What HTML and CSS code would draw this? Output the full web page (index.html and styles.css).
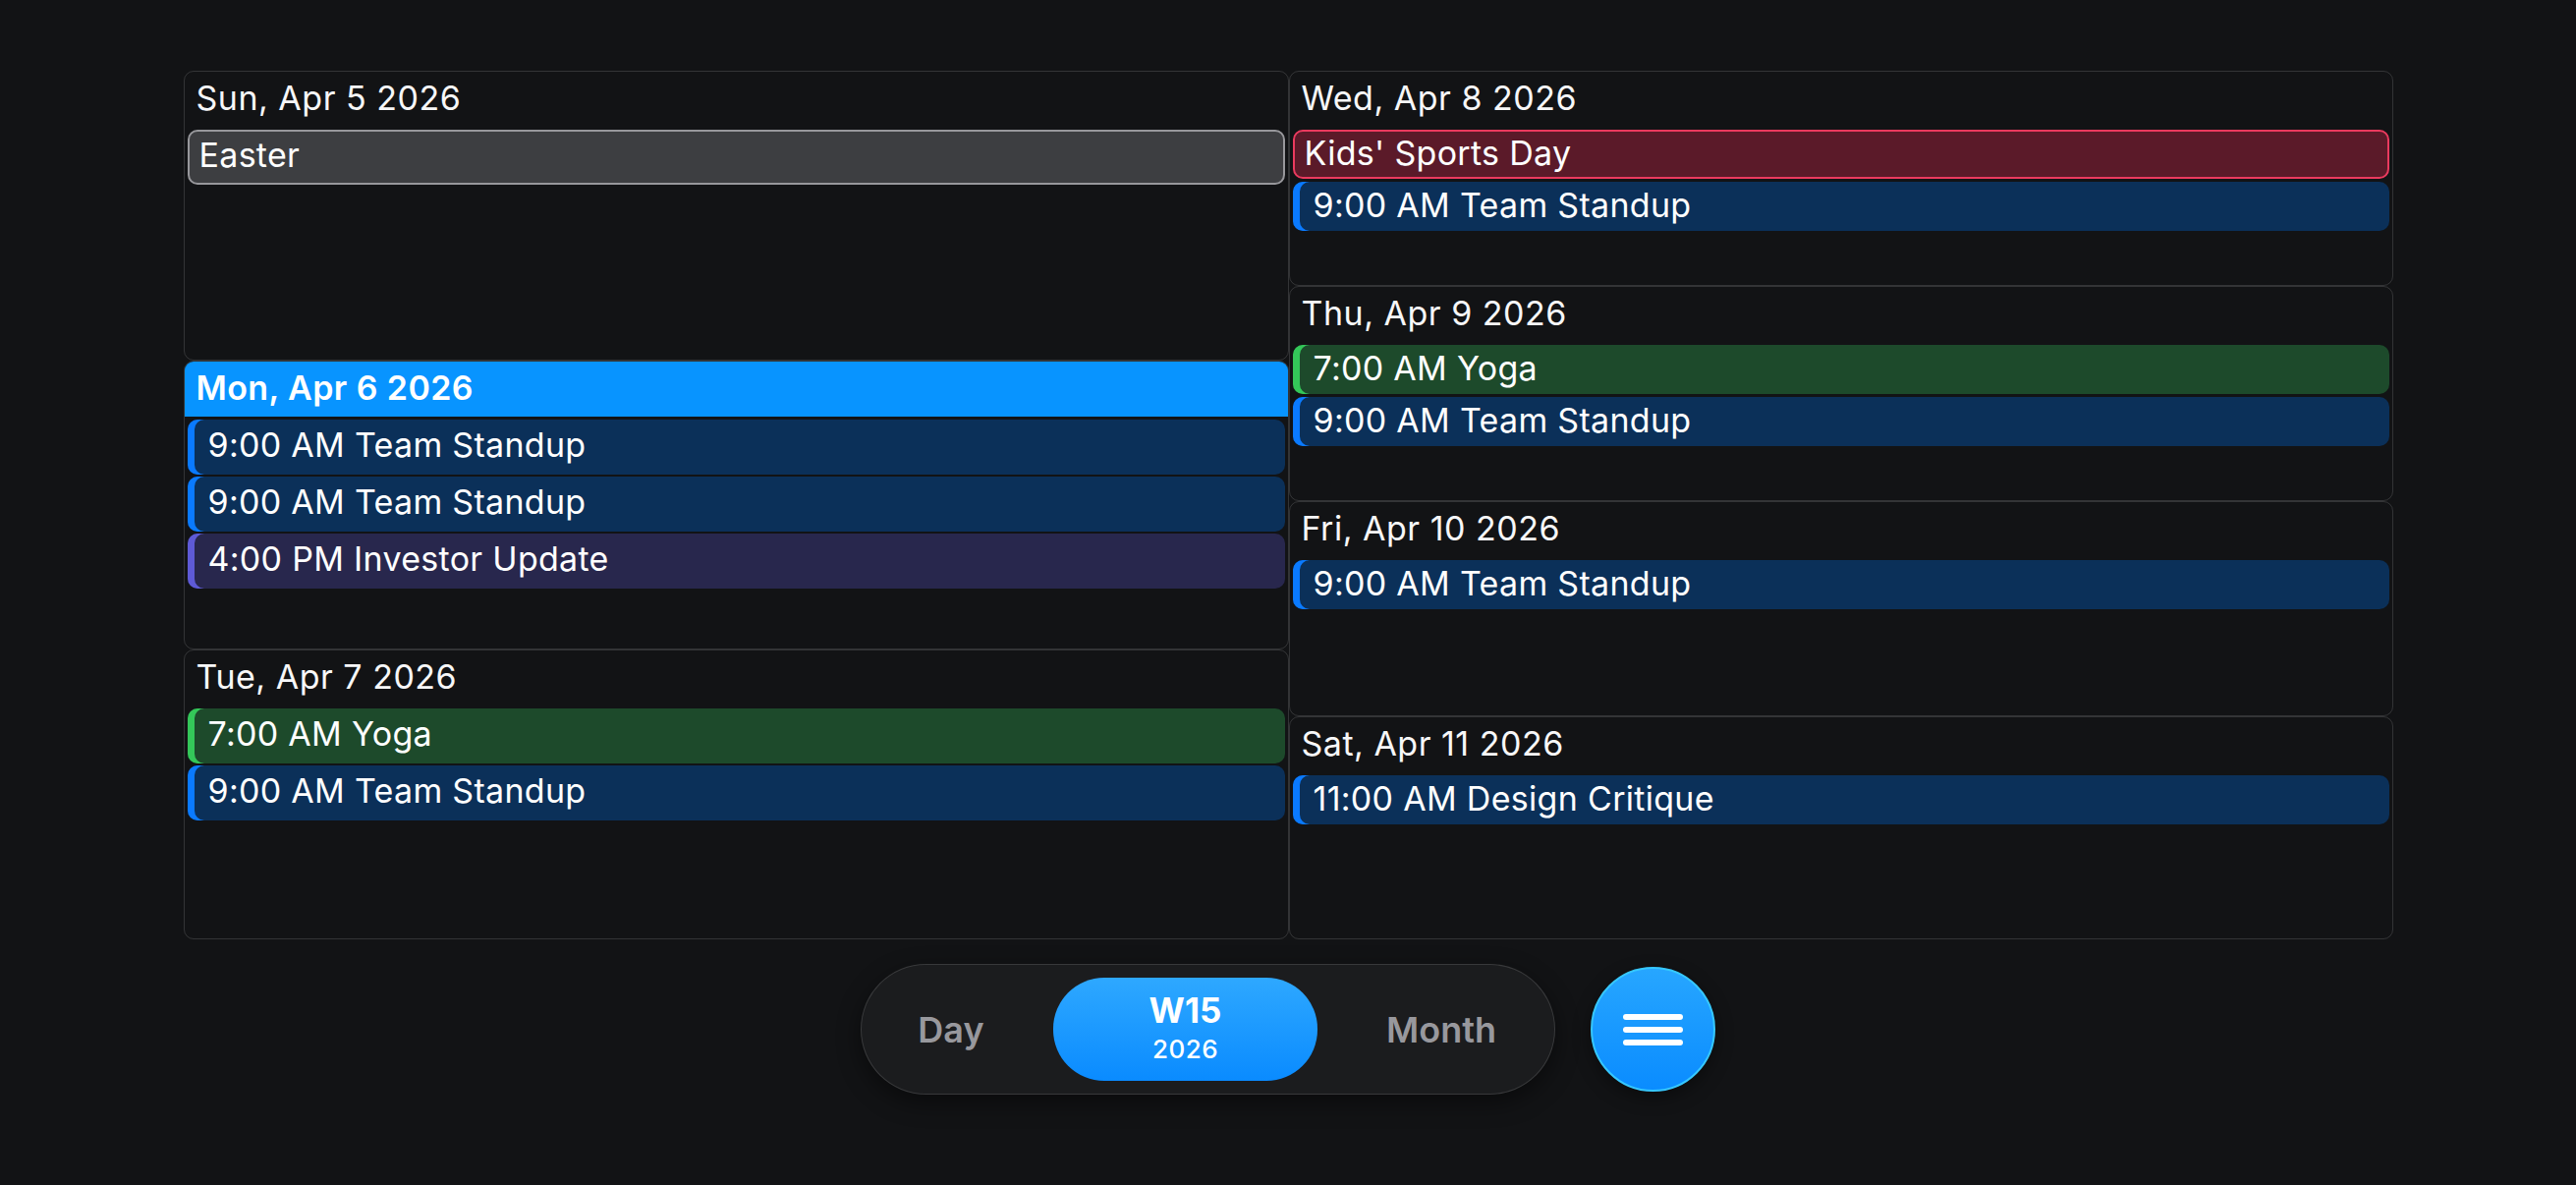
FILE: index.html
```html
<!DOCTYPE html>
<html lang="en">
<head>
<meta charset="utf-8">
<title>Week 15</title>
<link rel="stylesheet" href="styles.css">
</head>
<body>
<div class="page">
  <div class="week">
    <div class="col col-left">
      <section class="day">
        <div class="day-head">Sun, Apr 5 2026</div>
        <div class="events">
          <div class="allday allday-gray">Easter</div>
        </div>
      </section>
      <section class="day today">
        <div class="day-head">Mon, Apr 6 2026</div>
        <div class="events">
          <div class="ev ev-blue">9:00 AM Team Standup</div>
          <div class="ev ev-blue">9:00 AM Team Standup</div>
          <div class="ev ev-purple">4:00 PM Investor Update</div>
        </div>
      </section>
      <section class="day">
        <div class="day-head">Tue, Apr 7 2026</div>
        <div class="events">
          <div class="ev ev-green">7:00 AM Yoga</div>
          <div class="ev ev-blue">9:00 AM Team Standup</div>
        </div>
      </section>
    </div>
    <div class="col col-right">
      <section class="day">
        <div class="day-head">Wed, Apr 8 2026</div>
        <div class="events">
          <div class="allday allday-red">Kids' Sports Day</div>
          <div class="ev ev-blue">9:00 AM Team Standup</div>
        </div>
      </section>
      <section class="day">
        <div class="day-head">Thu, Apr 9 2026</div>
        <div class="events">
          <div class="ev ev-green">7:00 AM Yoga</div>
          <div class="ev ev-blue">9:00 AM Team Standup</div>
        </div>
      </section>
      <section class="day">
        <div class="day-head">Fri, Apr 10 2026</div>
        <div class="events">
          <div class="ev ev-blue">9:00 AM Team Standup</div>
        </div>
      </section>
      <section class="day day-last">
        <div class="day-head">Sat, Apr 11 2026</div>
        <div class="events">
          <div class="ev ev-blue">11:00 AM Design Critique</div>
        </div>
      </section>
    </div>
  </div>
  <div class="bar">
    <div class="seg">
      <div class="seg-item seg-day">Day</div>
      <div class="seg-item seg-week">
        <span class="wk">W15</span>
        <span class="yr">2026</span>
      </div>
      <div class="seg-item seg-month">Month</div>
    </div>
    <div class="menu-btn" aria-label="Menu">
      <span></span><span></span><span></span>
    </div>
  </div>
</div>
</body>
</html>
```

FILE: styles.css
```css
html, body {
  margin: 0;
  padding: 0;
  background: #121315;
}
body {
  font-family: Inter, "Noto Sans", "Liberation Sans", sans-serif;
  color: #ffffff;
}
.page {
  box-sizing: border-box;
  height: 1206px;
  padding-top: 72px;
  display: flex;
  flex-direction: column;
  align-items: center;
}
.week {
  display: grid;
  grid-template-columns: 1125px 1124px;
  width: 2249px;
  height: 884px;
}
.col {
  display: flex;
  flex-direction: column;
  min-height: 0;
}
.day {
  flex: 1 1 0;
  min-height: 0;
  border: 1px solid rgba(255, 255, 255, 0.14);
  border-radius: 10px;
  overflow: hidden;
}
.col-right .day {
  flex: 0 0 219px;
  box-sizing: border-box;
}
.col-right .day-last {
  flex: 1 1 auto;
}
.day-head {
  box-sizing: border-box;
  height: 56px;
  padding: 7px 12px 0;
  font-size: 34px;
  line-height: 40px;
  letter-spacing: 0.5px;
  color: #f7f7f8;
  white-space: nowrap;
}
.today .day-head {
  height: 57px;
  margin: -1px -1px 0;
  padding: 8px 13px 0;
  background: #0894ff;
  color: #ffffff;
  font-weight: 600;
  letter-spacing: 0.4px;
}
.events {
  display: flex;
  flex-direction: column;
  padding: 3px 3px 0;
}
.col-left .events { gap: 2px; }
.col-right .events { gap: 3px; }
.ev, .allday {
  box-sizing: border-box;
  display: flex;
  align-items: center;
  border-radius: 10px;
  font-size: 34px;
  line-height: 1;
  letter-spacing: 0.3px;
  white-space: nowrap;
}
.col-left .ev, .col-left .allday { height: 56px; padding-bottom: 4px; }
.col-right .ev, .col-right .allday { height: 50px; padding-bottom: 2px; }
.ev {
  padding-left: 21px;
}
.ev-blue {
  background: #0b3059;
  box-shadow: inset 7px 0 0 #0a7aff;
}
.ev-purple {
  background: #28274d;
  box-shadow: inset 7px 0 0 #5e5ad6;
}
.ev-green {
  background: #1d4a2b;
  box-shadow: inset 7px 0 0 #34c759;
}
.allday {
  border: 2px solid;
  padding-left: 10px;
}
.allday-gray {
  background: #3d3e41;
  border-color: #97979b;
}
.allday-red {
  background: #5b1a29;
  border: 2.5px solid #ea3a5e;
  padding-left: 10px;
}
.bar {
  margin-top: 25px;
  display: flex;
  align-items: center;
  gap: 36px;
}
.seg {
  box-sizing: border-box;
  height: 133px;
  padding: 13px;
  display: flex;
  border: 1.5px solid rgba(255, 255, 255, 0.13);
  border-radius: 67px;
  background: #1b1c1e;
  box-shadow: 0 8px 24px rgba(0, 0, 0, 0.45);
}
.seg-item {
  display: flex;
  align-items: center;
  justify-content: center;
  font-size: 36px;
  font-weight: 600;
  color: #98989d;
}
.seg-day { width: 182px; padding-right: 26px; box-sizing: border-box; }
.seg-month { width: 228px; box-sizing: border-box; padding-left: 24px; }
.seg-week {
  width: 269px;
  flex-direction: column;
  border-radius: 52px;
  background: linear-gradient(180deg, #2ea8ff 0%, #0a8bff 100%);
  color: #ffffff;
}
.wk {
  font-size: 35px;
  font-weight: 700;
  line-height: 38px;
}
.yr {
  font-size: 26px;
  font-weight: 500;
  line-height: 36px;
  margin-top: 3px;
  letter-spacing: 0.5px;
}
.menu-btn {
  box-sizing: border-box;
  width: 127px;
  height: 127px;
  border-radius: 50%;
  border: 2px solid #36c8ff;
  background: linear-gradient(180deg, #27a6ff 0%, #0a8cff 100%);
  display: flex;
  flex-direction: column;
  align-items: center;
  justify-content: center;
  gap: 7px;
  box-shadow: 0 6px 18px rgba(0, 0, 0, 0.4);
}
.menu-btn span {
  display: block;
  width: 61px;
  height: 6px;
  border-radius: 3px;
  background: #ffffff;
}
```
